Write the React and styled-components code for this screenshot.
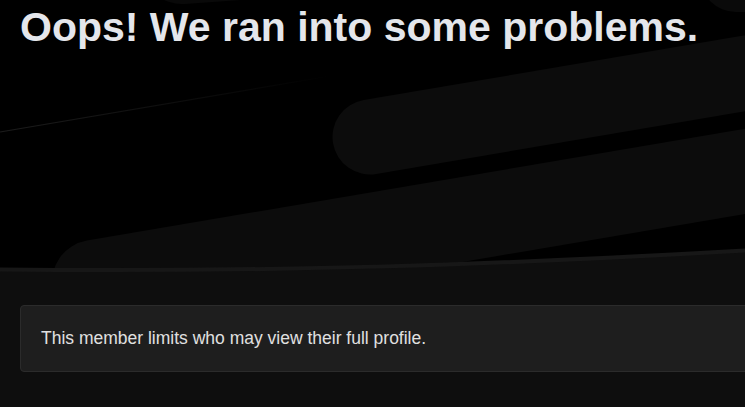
import styled, { createGlobalStyle } from "styled-components"

const GlobalStyle = createGlobalStyle`
  html, body {
    margin: 0;
    padding: 0;
    background: #0e0e0e;
    overflow: hidden;
  }
  body {
    font-family: "Liberation Sans", Arial, sans-serif;
    color: #e0e0e0;
  }
`

export default function App() {
  return (
    <Page>
      <GlobalStyle />
      <Hero>
        <HeroArt />
        <Title>Oops! We ran into some problems.</Title>
      </Hero>
      <Main>
        <Notice>This member limits who may view their full profile.</Notice>
      </Main>
    </Page>
  )
}

function HeroArt() {
  return (
    <Art viewBox="0 0 745 280" width="745" height="280" aria-hidden="true">
      <defs>
        <linearGradient id="fade" x1="0" y1="0" x2="1" y2="0">
          <stop offset="0" stopColor="#1c1c1c" />
          <stop offset="1" stopColor="#1c1c1c" stopOpacity="0" />
        </linearGradient>
      </defs>
      {/* faint shapes peeking from the top */}
      <rect x="140" y="-80" width="700" height="84" rx="42" fill="#090909" transform="rotate(-4 182 -38)" />
      <rect x="700" y="-60" width="300" height="72" rx="36" fill="#0a0a0a" />
      {/* thin streak */}
      <line x1="0" y1="132" x2="330" y2="76" stroke="url(#fade)" strokeWidth="1.2" />
      {/* upper bar */}
      <rect x="332.5" y="99.5" width="1000" height="75" rx="37.5" fill="#0c0c0c" transform="rotate(-9.65 370 137)" />
      {/* lower bar */}
      <rect x="52" y="240" width="1000" height="84" rx="42" fill="#0c0c0c" transform="rotate(-9.65 94 282)" />
      {/* curved bottom edge */}
      <path d="M0 268 C 280 271 500 263 745 249 L745 280 L0 280 Z" fill="#0e0e0e" />
      <path d="M0 269.5 C 280 272.5 500 264.5 745 250.5" fill="none" stroke="#171717" strokeWidth="4" />
    </Art>
  )
}

const Page = styled.div`
  display: flex;
  flex-direction: column;
  width: 100%;
  min-height: 100vh;
  background: #0e0e0e;
`

const Hero = styled.header`
  position: relative;
  height: 280px;
  background: #000;
  overflow: hidden;
`

const Art = styled.svg`
  position: absolute;
  inset: 0;
  display: block;
`

const Title = styled.h1`
  position: relative;
  margin: 0;
  padding: 3px 20px 0;
  font-size: 41px;
  line-height: 1.2;
  font-weight: 700;
  color: #e4e6eb;
  white-space: nowrap;
`

const Main = styled.main`
  padding: 25px 0 0 20px;
`

const Notice = styled.div`
  margin-right: -20px;
  padding: 20px 20px;
  background: #1e1e1e;
  border: 1px solid #2b2b2b;
  border-radius: 4px;
  font-size: 17.5px;
  line-height: 25px;
  color: #e0e0e0;
`
